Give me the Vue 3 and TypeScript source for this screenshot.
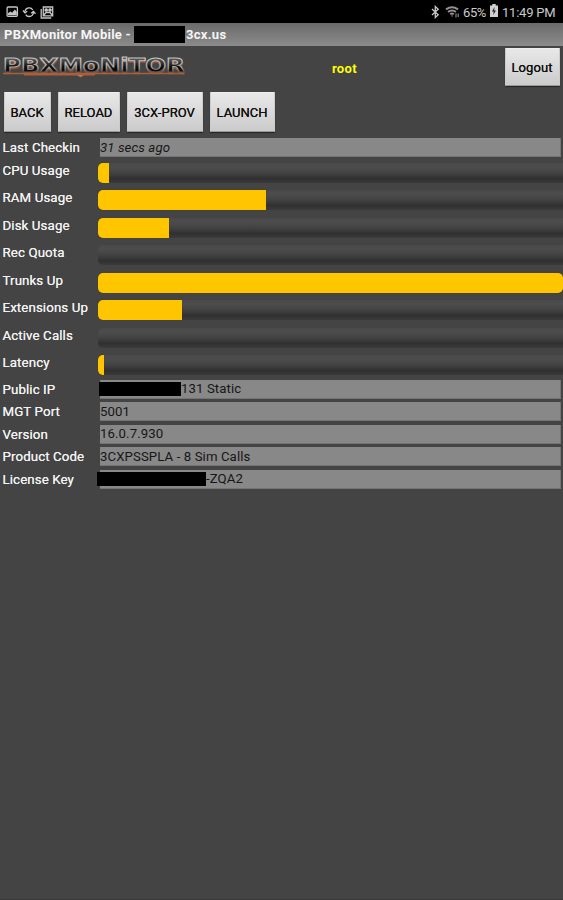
<script setup lang="ts">
interface Meter { label: string; width: number; full?: boolean }
interface Field { label: string; value: string; mask?: number; start?: number }

const buttons = [
  { text: 'BACK', width: 47 },
  { text: 'RELOAD', width: 62 },
  { text: '3CX-PROV', width: 76 },
  { text: 'LAUNCH', width: 65 },
]
const meters: Meter[] = [
  { label: 'CPU Usage', width: 10.5 },
  { label: 'RAM Usage', width: 168 },
  { label: 'Disk Usage', width: 71 },
  { label: 'Rec Quota', width: 0 },
  { label: 'Trunks Up', width: 465, full: true },
  { label: 'Extensions Up', width: 84 },
  { label: 'Active Calls', width: 0 },
  { label: 'Latency', width: 6 },
]
const fields: Field[] = [
  { label: 'Public IP', value: '131 Static', mask: 82, start: 99 },
  { label: 'MGT Port', value: '5001' },
  { label: 'Version', value: '16.0.7.930' },
  { label: 'Product Code', value: '3CXPSSPLA - 8 Sim Calls' },
  { label: 'License Key', value: '-ZQA2', mask: 109, start: 97 },
]
</script>

<template>
  <main class="screen">
    <div class="status">
      <div class="notices">
        <svg width="48" height="16" viewBox="0 0 48 16" fill="none" stroke="#c6c6c6" stroke-width="1.3">
          <rect x="1.1" y="3" width="10.3" height="9.3" rx="1" />
          <path d="M2 11.3V9.2l2.3-1.8 1.8 1.4 2.7-3.2 2 2.2v3.5z" fill="#c6c6c6" stroke="none" />
          <path d="M19 7.4A4.2 4.2 0 0 1 26.800 6M27.400 8.500A4.200 4.200 0 0 1 19.700 10.600M17 6.500l2 2.400 2.200-1.700M25.200 9.200l2.200-1.900 2.100 2.400" />
          <path d="M37.300 3h9.400v8.900h-9.400zM35.200 5v9h10M37.500 11.500l2.500-3h4l2.500 3" />
          <circle cx="40.200" cy="6" r="1.200" fill="#c6c6c6" /><circle cx="44" cy="6" r="1.200" fill="#c6c6c6" />
        </svg>
      </div>
      <div class="indicators">
        <svg class="bt" width="9" height="14" viewBox="0 0 9 14" fill="none" stroke="#c9c9c9" stroke-width="1.300">
          <path d="M1 4l6.200 5.700L4.300 12.400V1.600l2.900 2.700L1 10" />
        </svg>
        <svg class="wifi" width="16" height="14" viewBox="0 0 16 14" fill="none" stroke="#929292" stroke-width="1.900">
          <path d="M1 4.400Q7 .2 13 4.400M3 6.900q4-2.800 8 0M5.200 9.200q1.800-1.300 3.600 0" />
          <path d="M6 10.500h2.200L7.100 12z" fill="#929292" stroke="none" />
          <path d="M11 8.500v4M13.200 12V8.500" stroke-width="1.100" />
        </svg>
        <span class="percent">65%</span>
        <svg class="battery" width="8" height="14" viewBox="0 0 8 14">
          <path d="M2.300 0h3.400v1.500H8V13H0V1.500h2.300z" fill="#d0d0d0" />
          <path d="M4.500 3L2 7.500h1.700L3.300 11l2.600-4.500H4.200z" fill="#222" />
        </svg>
        <span class="clock">11:49 PM</span>
      </div>
    </div>

    <header class="title">
      <span class="app-name">PBXMonitor Mobile -</span>
      <i class="mask host-mask"></i>
      <span class="host">3cx.us</span>
    </header>

    <section class="brand">
      <svg class="logo" width="190" height="30" viewBox="0 0 190 30">
        <defs>
          <linearGradient id="ink" x1="0" y1="0" x2="0" y2="1">
            <stop offset="0.25" stop-color="#555" /><stop offset="0.6" stop-color="#0c0c0c" />
          </linearGradient>
          <linearGradient id="rim" x1="0" y1="0" x2="0" y2="1">
            <stop offset="0.25" stop-color="#c4c4c4" /><stop offset="0.62" stop-color="#a5a5a5" /><stop offset="0.8" stop-color="#5b5450" />
          </linearGradient>
        </defs>
        <g class="wordmark">
          <text class="glow" x="3" y="23.500" textLength="182" lengthAdjust="spacingAndGlyphs">PBXMoNiTOR</text>
          <text class="face" x="3" y="22" textLength="182" lengthAdjust="spacingAndGlyphs">PBXMoNiTOR</text>
        </g>
        <path d="M3 23.500H184M24 24.800h71" stroke="#a95f3b" stroke-width="1.500" />
        <path d="M77 25h7l-3.500 2.500z" fill="#b9754b" />
      </svg>
      <span class="user">root</span>
      <button class="button logout">Logout</button>
    </section>

    <nav class="actions">
      <button v-for="b in buttons" :key="b.text" class="button" :style="{ width: b.width + 'px' }">{{ b.text }}</button>
    </nav>

    <section>
      <div class="field-row first">
        <span class="label">Last Checkin</span>
        <div class="field italic">31 secs ago</div>
      </div>
      <div v-for="m in meters" :key="m.label" class="meter-row">
        <span class="label">{{ m.label }}</span>
        <div class="track">
          <div v-if="m.width" class="fill" :class="{ full: m.full }" :style="{ width: m.width + 'px' }"></div>
        </div>
      </div>
      <div v-for="f in fields" :key="f.label" class="field-row">
        <span class="label">{{ f.label }}</span>
        <div class="field">
          <i v-if="f.mask" class="mask" :style="{ width: f.mask + 'px', marginLeft: (f.start ?? 100) - 100 + 'px' }"></i>
          <span>{{ f.value }}</span>
        </div>
      </div>
    </section>
  </main>
</template>

<style>
body { background: #444; }
</style>

<style scoped>
* { box-sizing: border-box; }
.screen {
  width: 563px; height: 900px; overflow: hidden; background: #444;
  font-family: Roboto, "Liberation Sans", sans-serif; font-size: 13px; color: #f1f1f1;
  border-bottom: 1px solid #383838;
}
.status { height: 23px; background: #000; display: flex; justify-content: space-between; padding: 0 8px 0 6px; }
.notices { padding-top: 4px; }
.notices svg { display: block; }
.indicators { display: flex; align-items: center; color: #cacaca; font-size: 13px; padding-top: 1px; }
.bt { margin-right: 5px; }
.wifi { margin-right: 2px; }
.percent { width: 23px; font-size: 13px; letter-spacing: -.4px; }
.battery { margin: 0 4px; position: relative; top: -1px; }
.clock { width: 53px; letter-spacing: -.22px; white-space: nowrap; }
.title {
  height: 23px; display: flex; align-items: center; padding-left: 4px;
  background: linear-gradient(#6b6b6b, #8b8b8b); font-weight: 700; color: #f5f5f5; white-space: nowrap;
}
.app-name { width: 130px; letter-spacing: .25px; }
.mask { display: block; flex: none; background: #000; }
.host-mask { width: 51px; height: 17px; }
.host { padding-left: 1px; letter-spacing: .3px; }
.brand { height: 46px; display: flex; align-items: flex-start; }
.logo { flex: none; margin-top: 4px; }
.wordmark { font-family: "DejaVu Sans", sans-serif; font-weight: 700; font-size: 19px; }
.glow { fill: #8e5235; stroke: #8e5235; stroke-width: .6px; }
.face { fill: url(#ink); stroke: url(#rim); stroke-width: 1px; }
.user { width: 315px; padding: 15px 0 0 142px; font-weight: 700; font-size: 13px; letter-spacing: .3px; color: #ff0; }
.button {
  height: 40px; padding: 0; border: 1px solid #bbb; border-color: #eee #ccc #999; border-radius: 1px;
  background: linear-gradient(#e8e8e8, #cbcbcb); box-shadow: 0 1px 1px #252525;
  font-family: inherit; font-size: 13px; font-weight: 400; color: #111; white-space: nowrap;
  text-shadow: 0 0 .5px #111; padding-right: 1px;
}
.logout { width: 55px; height: 38px; margin-top: 2px; letter-spacing: .1px; }
.actions { height: 46px; display: flex; gap: 7px; padding-left: 4px; }
.field-row { height: 22.500px; display: flex; padding-left: 2.500px; }
.first { height: 21.500px; }
.label { width: 97.500px; flex: none; line-height: 20px; font-size: 13.300px; letter-spacing: .1px; text-shadow: 0 0 .5px #f1f1f1; white-space: nowrap; }
.field {
  width: 461px; height: 19px; background: #888; border: solid #747474; border-width: 0 1px 1px 0;
  display: flex; align-items: center; padding-top: 1px; line-height: 18px; color: #161616;
  font-size: 13.200px; letter-spacing: .1px;
}
.field .mask { height: 14px; }
.italic { font-style: italic; }
.meter-row { height: 27.500px; display: flex; padding-left: 2.500px; }
.meter-row .label { width: 95.500px; line-height: 22px; }
.track {
  flex: 1; height: 20px; margin-top: 3px; border-radius: 5px 0 0 5px;
  background: linear-gradient(#494949 0, #4d4d4d 20%, #424242 50%, #303030 78%, #3b3b3b 100%);
}
.fill { height: 20px; background: #ffc600; border-radius: 5px 0 0 5px; box-shadow: 0 0 1px #4c3c00; }
.fill.full { border-radius: 5px; }
</style>
